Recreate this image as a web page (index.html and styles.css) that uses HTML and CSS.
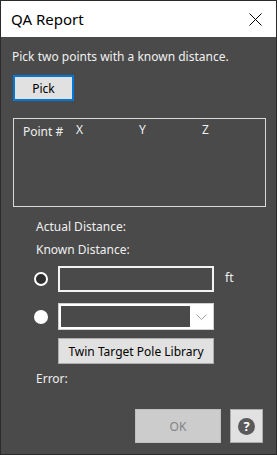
FILE: index.html
```html
<!DOCTYPE html>
<html lang="en">
<head>
  <meta charset="UTF-8" />
  <title>QA Report</title>
  <link rel="stylesheet" href="styles.css">
</head>
<body>
  <div class="window">
    <div class="title-bar">
      <span class="title">QA Report</span>
      <button class="close-btn" title="Close">
        <svg width="13" height="13" viewBox="0 0 13 13"><path d="M0.5 0.5 L12.5 12.5 M12.5 0.5 L0.5 12.5" stroke="#000" stroke-width="1" fill="none"/></svg>
      </button>
    </div>

    <div class="content">
      <p class="hint">Pick two points with a known distance.</p>
      <button class="btn btn-pick">Pick</button>

      <div class="points-box">
        <div class="points-head">
          <span class="col-point">Point #</span>
          <span class="col-x">X</span>
          <span class="col-y">Y</span>
          <span class="col-z">Z</span>
        </div>
      </div>

      <div class="distance">
        <div class="label">Actual Distance:</div>
        <div class="label">Known Distance:</div>

        <div class="option-row row-text">
          <span class="radio"></span>
          <input class="text-input" type="text" />
          <span class="unit">ft</span>
        </div>

        <div class="option-row row-combo">
          <span class="radio checked"></span>
          <div class="combo">
            <div class="combo-edit"></div>
            <div class="combo-arrow">
              <svg width="11" height="7" viewBox="0 0 11 7"><path d="M0.5 0.5 L5.5 5.5 L10.5 0.5" stroke="#a0a0a0" stroke-width="1" fill="none"/></svg>
            </div>
          </div>
        </div>

        <button class="btn btn-library">Twin Target Pole Library</button>

        <div class="label label-error">Error:</div>
      </div>

      <div class="footer">
        <button class="btn btn-ok" disabled>OK</button>
        <button class="btn btn-help" title="Help"><span class="help-icon">?</span></button>
      </div>
    </div>
  </div>
</body>
</html>
```

FILE: styles.css
```css
body {
  margin: 0;
  font-family: 'Noto Sans', 'Open Sans', sans-serif;
  font-size: 12px;
  background: #4a4a4a;
}

.window {
  width: 275px;
  height: 453px;
  border: 1px solid #2b2b2b;
  background: #4a4a4a;
  color: #f0f0f0;
  display: flex;
  flex-direction: column;
}

.title-bar {
  height: 36px;
  background: #fff;
  display: flex;
  align-items: center;
  justify-content: space-between;
  padding: 0 14px 0 10px;
}

.title {
  font-size: 15px;
  color: #000;
  margin-top: -1px;
}

.close-btn {
  background: none;
  border: none;
  padding: 0;
  width: 13px;
  height: 13px;
  display: flex;
}

.content {
  flex: 1;
  padding: 12px 12px 0 11px;
  display: flex;
  flex-direction: column;
}

.hint {
  margin: 0;
  line-height: 16px;
}

.btn {
  font-family: inherit;
  font-size: 12px;
  color: #000;
  background: #e1e1e1;
  border: 1px solid #adadad;
  padding: 0;
}

.btn-pick {
  margin: 10px 0 0 1px;
  width: 61px;
  height: 26px;
  border: 2px solid #0078d7;
}

.points-box {
  margin: 17px 0 0 1px;
  width: 251px;
  height: 87px;
  border: 1px solid #d9d9d9;
}

.points-head {
  display: flex;
  line-height: 16px;
  padding-top: 5px;
}

.col-point { margin-left: 9px; width: 53px; }
.col-x { width: 63px; margin-top: -2px; }
.col-y { width: 63px; margin-top: -2px; }
.col-z { margin-top: -2px; }

.distance {
  padding-left: 22px;
  display: flex;
  flex-direction: column;
}

.label {
  line-height: 16px;
  margin-top: 7px;
  margin-left: 2px;
}

.distance .label:first-child {
  margin-top: 12px;
}

.option-row {
  display: flex;
  align-items: center;
}

.row-text { margin-top: 8px; }
.row-combo { margin-top: 11px; }

.radio {
  width: 10px;
  height: 10px;
  border: 2px solid #fff;
  border-radius: 50%;
  background: #2e2e2e;
  margin-right: 10px;
}

.radio.checked {
  background: #fff;
}

.text-input {
  width: 152px;
  height: 22px;
  padding: 0;
  margin: 0;
  background: #4a4a4a;
  border: 2px solid #f2f2f2;
  box-shadow: 0 0 0 0 #bdbdbd;
  outline: none;
}

.unit {
  margin-left: 11px;
  margin-top: -3px;
}

.combo {
  width: 156px;
  height: 27px;
  box-sizing: border-box;
  background: #fff;
  border: 1px solid #d0d0d0;
  display: flex;
  padding: 2px 0 2px 2px;
}

.combo-edit {
  flex: 1;
  background: #4a4a4a;
}

.combo-arrow {
  width: 23px;
  display: flex;
  align-items: center;
  justify-content: center;
  padding-top: 1px;
}

.btn-library {
  margin-top: 8px;
  margin-left: 24px;
  width: 156px;
  height: 26px;
  font-size: 12px;
}

.footer {
  margin-top: 22px;
  display: flex;
  justify-content: flex-end;
  gap: 9px;
  padding-right: 1px;
}

.btn-ok {
  width: 86px;
  height: 34px;
  background: #cccccc;
  border-color: #bfbfbf;
  color: #838383;
}

.btn-help {
  width: 33px;
  height: 34px;
  display: flex;
  align-items: center;
  justify-content: center;
}

.help-icon {
  width: 17px;
  height: 17px;
  border-radius: 50%;
  background: #5a5a5a;
  color: #fff;
  font-weight: bold;
  font-size: 13px;
  line-height: 17px;
  text-align: center;
}
```
